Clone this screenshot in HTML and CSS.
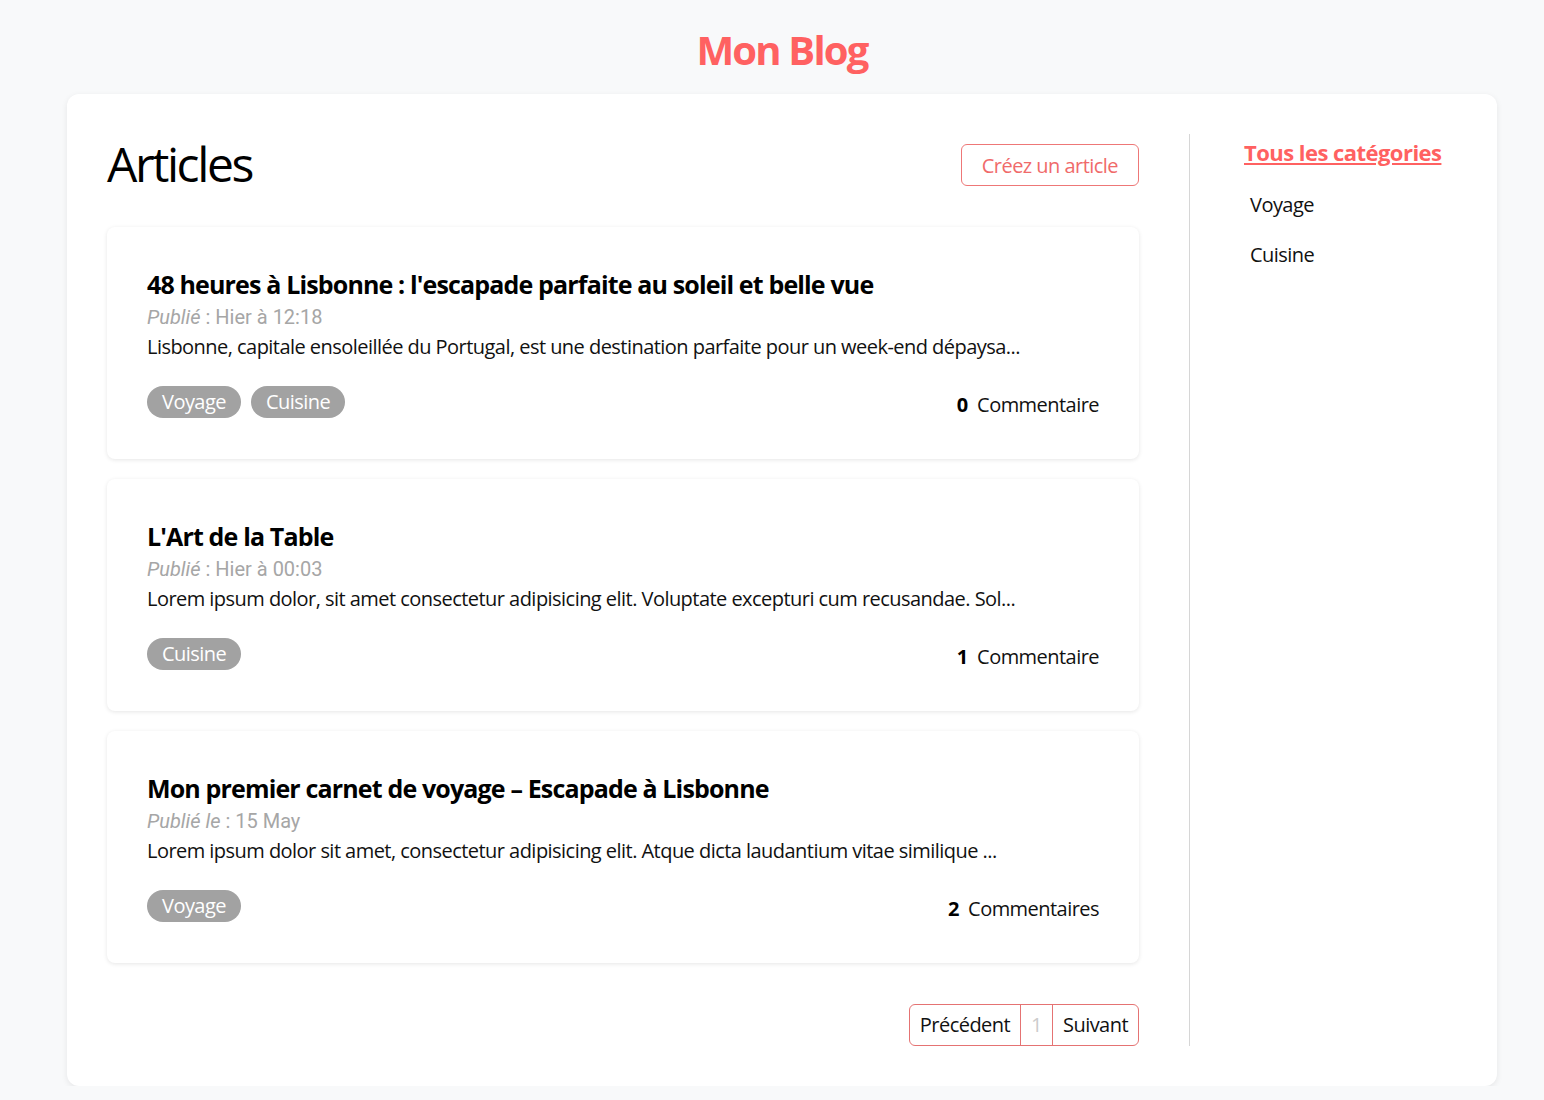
FILE: index.html
```html
<!DOCTYPE html>
<html lang="fr">
<head>
<meta charset="utf-8">
<title>Mon Blog</title>
<link rel="stylesheet" href="styles.css">
</head>
<body>
<header class="site-header">
  <h1 class="site-title">Mon Blog</h1>
</header>
<div class="container">
  <main class="main-col">
    <div class="main-head">
      <h2 class="page-title">Articles</h2>
      <a class="btn-outline" href="#">Créez un article</a>
    </div>

    <article class="card">
      <h3 class="card-title">48 heures à Lisbonne : l'escapade parfaite au soleil et belle vue</h3>
      <div class="meta"><em>Publié</em> : Hier à 12:18</div>
      <p class="excerpt">Lisbonne, capitale ensoleillée du Portugal, est une destination parfaite pour un week-end dépaysa...</p>
      <div class="card-foot">
        <div class="tags"><span class="tag">Voyage</span><span class="tag">Cuisine</span></div>
        <div class="comments"><b>0</b>&nbsp; Commentaire</div>
      </div>
    </article>

    <article class="card">
      <h3 class="card-title">L'Art de la Table</h3>
      <div class="meta"><em>Publié</em> : Hier à 00:03</div>
      <p class="excerpt">Lorem ipsum dolor, sit amet consectetur adipisicing elit. Voluptate excepturi cum recusandae. Sol...</p>
      <div class="card-foot">
        <div class="tags"><span class="tag">Cuisine</span></div>
        <div class="comments"><b>1</b>&nbsp; Commentaire</div>
      </div>
    </article>

    <article class="card">
      <h3 class="card-title">Mon premier carnet de voyage – Escapade à Lisbonne</h3>
      <div class="meta"><em>Publié le</em> : 15 May</div>
      <p class="excerpt">Lorem ipsum dolor sit amet, consectetur adipisicing elit. Atque dicta laudantium vitae similique ...</p>
      <div class="card-foot">
        <div class="tags"><span class="tag">Voyage</span></div>
        <div class="comments"><b>2</b>&nbsp; Commentaires</div>
      </div>
    </article>

    <nav class="pager">
      <a class="page-btn" href="#">Précédent</a>
      <span class="page-btn disabled">1</span>
      <a class="page-btn" href="#">Suivant</a>
    </nav>
  </main>
  <aside class="sidebar">
    <a class="side-title" href="#">Tous les catégories</a>
    <ul class="cat-list">
      <li>Voyage</li>
      <li>Cuisine</li>
    </ul>
  </aside>
</div>
</body>
</html>
```
FILE: styles.css
```css
* { box-sizing: border-box; }
body {
  margin: 0;
  background: #f8f9fa;
  font-family: "Open Sans", "Noto Sans", sans-serif;
  font-size: 20px;
  letter-spacing: -0.027em;
  color: #111;
}
.site-header {
  margin-left: 67px;
  width: 1430px;
  padding-top: 26px;
  height: 94px;
  text-align: center;
}
.site-title {
  margin: 0;
  font-size: 40px;
  line-height: 48px;
  font-weight: 700;
  letter-spacing: -0.045em;
  color: #ff6161;
}
.container {
  margin-left: 67px;
  width: 1430px;
  background: #fff;
  border-radius: 12px;
  box-shadow: 0 2px 6px rgba(0,0,0,0.08);
  padding: 40px;
  display: flex;
}
.main-col {
  width: 1032px;
  flex: none;
}
.main-head {
  display: flex;
  justify-content: space-between;
  align-items: center;
  height: 60px;
  margin-bottom: 33px;
}
.page-title {
  margin: 0;
  font-size: 48px;
  font-weight: 400;
  line-height: 60px;
  letter-spacing: -2.4px;
  color: #000;
}
.btn-outline {
  display: inline-flex;
  align-items: center;
  height: 42px;
  padding: 0 20px;
  border: 1px solid #ee7777;
  border-radius: 6px;
  color: #f06a6a;
  text-decoration: none;
  font-size: 20px;
  margin-top: 2px;
}
.card {
  background: #fff;
  border-radius: 8px;
  box-shadow: 0 1px 4px rgba(0,0,0,0.1);
  padding: 42px 40px 38px;
  height: 232px;
  margin-bottom: 20px;
}
.card-title {
  margin: 0 0 3px;
  font-size: 25px;
  line-height: 30px;
  font-weight: 700;
  letter-spacing: -0.034em;
  color: #000;
}
.meta {
  color: #a6a6a6;
  line-height: 30px;
  letter-spacing: 0;
  font-family: Roboto, "Open Sans", sans-serif;
}
.excerpt {
  margin: 0;
  line-height: 30px;
}
.card-foot {
  margin-top: 23px;
  display: flex;
  justify-content: space-between;
  align-items: center;
  height: 33px;
}
.tags { display: flex; gap: 10px; }
.tag {
  background: #a2a2a2;
  color: #fff;
  border-radius: 16px;
  height: 32px;
  line-height: 32px;
  padding: 0 15px;
}
.comments {
  padding-top: 5px;
}
.comments b { font-weight: 700; color: #000; }
.pager {
  display: flex;
  justify-content: flex-end;
  margin-top: 41px;
}
.page-btn {
  height: 42px;
  line-height: 40px;
  padding: 0 10px;
  border: 1px solid #e57373;
  color: #111;
  text-decoration: none;
  margin-left: -1px;
}
.page-btn:first-child { border-radius: 6px 0 0 6px; }
.page-btn:last-child { border-radius: 0 6px 6px 0; }
.page-btn.disabled { color: #ccc; }
.sidebar {
  flex: 1;
  margin-left: 50px;
  border-left: 1px solid #d6d6d6;
  padding-left: 54px;
}
.side-title {
  display: block;
  white-space: nowrap;
  color: #ff6161;
  font-weight: 700;
  font-size: 22px;
  line-height: 36px;
  text-decoration: underline;
}
.cat-list {
  list-style: none;
  margin: 0;
  padding: 20px 0 0 6px;
}
.cat-list li {
  line-height: 30px;
  margin-bottom: 20px;
}
```
